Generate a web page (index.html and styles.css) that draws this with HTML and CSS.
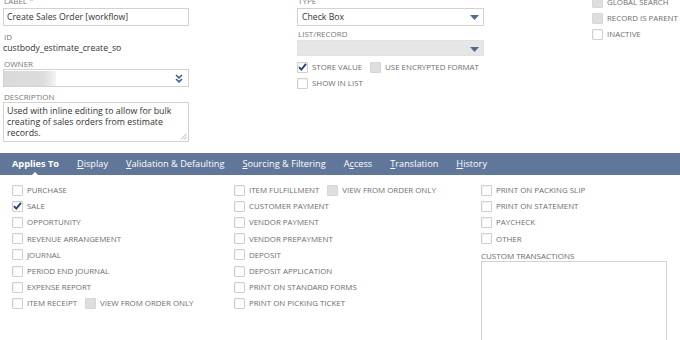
FILE: index.html
```html
<!DOCTYPE html>
<html>
<head>
<meta charset="utf-8">
<link rel="stylesheet" href="styles.css">
</head>
<body>
<div class="top">
  <div class="col">
    <div class="field">
      <div class="lbl">LABEL <span class="req">*</span></div>
      <div class="input">Create Sales Order [workflow]</div>
    </div>
    <div class="field f-id">
      <div class="lbl">ID</div>
      <div class="val">custbody_estimate_create_so</div>
    </div>
    <div class="field f-owner">
      <div class="lbl">OWNER</div>
      <div class="input owner">
        <span class="blur"></span>
        <svg class="dbl" width="8" height="9" viewBox="0 0 8 9"><path d="M1 1 L4 3.8 L7 1 M1 5 L4 7.8 L7 5" fill="none" stroke="#3d5f95" stroke-width="1.6"/></svg>
      </div>
    </div>
    <div class="field f-desc">
      <div class="lbl">DESCRIPTION</div>
      <div class="textarea">Used with inline editing to allow for bulk creating of sales orders from estimate records.
        <svg class="grip" width="7" height="7" viewBox="0 0 7 7"><path d="M6.5 1 L1 6.5 M6.5 4 L4 6.5" stroke="#999" stroke-width="0.8"/></svg>
      </div>
    </div>
  </div>

  <div class="col">
    <div class="field">
      <div class="lbl">TYPE</div>
      <div class="input select">
        <span>Check Box</span>
        <svg width="9" height="5" viewBox="0 0 9 5"><path d="M0 0 H9 L4.5 5 Z" fill="#506a94"/></svg>
      </div>
    </div>
    <div class="field f-list">
      <div class="lbl">LIST/RECORD</div>
      <div class="input select disabled">
        <span></span>
        <svg width="9" height="5" viewBox="0 0 9 5"><path d="M0 0 H9 L4.5 5 Z" fill="#506a94"/></svg>
      </div>
    </div>
    <div class="cbrow first">
      <span class="cb"><svg width="11" height="11" viewBox="0 0 11 11"><path d="M2 5.2 L4.3 7.6 L9 1.8" fill="none" stroke="#24467a" stroke-width="1.9"/></svg></span>
      <span class="cbl">STORE VALUE</span>
      <span class="cb grey"></span>
      <span class="cbl">USE ENCRYPTED FORMAT</span>
    </div>
    <div class="cbrow second">
      <span class="cb"></span>
      <span class="cbl">SHOW IN LIST</span>
    </div>
  </div>

  <div class="col right">
    <div class="cbrow r"><span class="cb grey"></span><span class="cbl">GLOBAL SEARCH</span></div>
    <div class="cbrow r"><span class="cb grey"></span><span class="cbl">RECORD IS PARENT</span></div>
    <div class="cbrow r"><span class="cb"></span><span class="cbl">INACTIVE</span></div>
  </div>
</div>

<div class="tabs">
  <span class="tab active">Applies To<i class="notch"></i></span>
  <span class="tab"><u>D</u>isplay</span>
  <span class="tab"><u>V</u>alidation &amp; Defaulting</span>
  <span class="tab"><u>S</u>ourcing &amp; Filtering</span>
  <span class="tab">A<u>c</u>cess</span>
  <span class="tab"><u>T</u>ranslation</span>
  <span class="tab"><u>H</u>istory</span>
</div>

<div class="panel">
  <div class="pcol">
    <div class="prow"><span class="cb"></span><span class="cbl">PURCHASE</span></div>
    <div class="prow"><span class="cb"><svg width="11" height="11" viewBox="0 0 11 11"><path d="M2 5.2 L4.3 7.6 L9 1.8" fill="none" stroke="#24467a" stroke-width="1.9"/></svg></span><span class="cbl">SALE</span></div>
    <div class="prow"><span class="cb"></span><span class="cbl">OPPORTUNITY</span></div>
    <div class="prow"><span class="cb"></span><span class="cbl">REVENUE ARRANGEMENT</span></div>
    <div class="prow"><span class="cb"></span><span class="cbl">JOURNAL</span></div>
    <div class="prow"><span class="cb"></span><span class="cbl">PERIOD END JOURNAL</span></div>
    <div class="prow"><span class="cb"></span><span class="cbl">EXPENSE REPORT</span></div>
    <div class="prow"><span class="cb"></span><span class="cbl">ITEM RECEIPT</span><span class="cb grey"></span><span class="cbl">VIEW FROM ORDER ONLY</span></div>
  </div>
  <div class="pcol">
    <div class="prow"><span class="cb"></span><span class="cbl">ITEM FULFILLMENT</span><span class="cb grey"></span><span class="cbl">VIEW FROM ORDER ONLY</span></div>
    <div class="prow"><span class="cb"></span><span class="cbl">CUSTOMER PAYMENT</span></div>
    <div class="prow"><span class="cb"></span><span class="cbl">VENDOR PAYMENT</span></div>
    <div class="prow"><span class="cb"></span><span class="cbl">VENDOR PREPAYMENT</span></div>
    <div class="prow"><span class="cb"></span><span class="cbl">DEPOSIT</span></div>
    <div class="prow"><span class="cb"></span><span class="cbl">DEPOSIT APPLICATION</span></div>
    <div class="prow"><span class="cb"></span><span class="cbl">PRINT ON STANDARD FORMS</span></div>
    <div class="prow"><span class="cb"></span><span class="cbl">PRINT ON PICKING TICKET</span></div>
  </div>
  <div class="pcol">
    <div class="prow"><span class="cb"></span><span class="cbl">PRINT ON PACKING SLIP</span></div>
    <div class="prow"><span class="cb"></span><span class="cbl">PRINT ON STATEMENT</span></div>
    <div class="prow"><span class="cb"></span><span class="cbl">PAYCHECK</span></div>
    <div class="prow"><span class="cb"></span><span class="cbl">OTHER</span></div>
    <div class="lbl ct">CUSTOM TRANSACTIONS</div>
    <div class="ctbox"></div>
  </div>
</div>
</body>
</html>
```

FILE: styles.css
```css
* { box-sizing: border-box; }
html, body { margin: 0; padding: 0; background: #fff; overflow: hidden; }
body {
  width: 680px;
  height: 340px;
  font-family: "Open Sans", "Noto Sans", sans-serif;
  color: #333;
}

.top {
  display: grid;
  grid-template-columns: 186px 187px 1fr;
  column-gap: 108px;
  padding-left: 3px;
  margin-top: -4px;
  margin-bottom: 11px;
}
.col { display: flex; flex-direction: column; }

.lbl {
  font-size: 8px;
  line-height: 10px;
  height: 10px;
  color: #777;
  text-transform: uppercase;
  padding-left: 1px;
  white-space: nowrap;
}
.req { color: #f0a22c; font-size: 9px; }

.input {
  margin-top: 2px;
  height: 18px;
  border: 1px solid #d2d2d2;
  padding: 0 3px;
  font-size: 8.7px;
  line-height: 16px;
  color: #333;
  background: #fff;
  white-space: nowrap;
}
.f-id { margin-top: 6px; }
.val { font-size: 8.7px; line-height: 12px; color: #333; }
.f-owner { margin-top: 5px; }
.f-owner .input { margin-top: 0; }
.owner {
  display: flex;
  align-items: center;
  justify-content: space-between;
  padding: 1px 5px 0 0;
}
.blur {
  width: 52px;
  height: 15px;
  align-self: flex-start;
  background: linear-gradient(to right, #dadada 0%, #dcdcdc 75%, #f3f3f3 100%);
}
.f-desc { margin-top: 5px; }
.textarea {
  position: relative;
  height: 40px;
  border: 1px solid #d2d2d2;
  padding: 3px 3px 0 3px;
  font-size: 8.8px;
  line-height: 11px;
  color: #333;
}
.grip { position: absolute; right: 1px; bottom: 1px; }

.select {
  display: flex;
  align-items: center;
  justify-content: space-between;
  padding: 0 4px 0 4px;
}
.f-list { margin-top: 3px; }
.f-list .input { margin-top: 1px; height: 16px; }
.disabled { background: #e6e6e6; border-color: #e2e2e2; }
.disabled svg { margin-top: 3px; }

.cbrow {
  display: flex;
  align-items: center;
  height: 12px;
}
.cbrow.first { margin-top: 5px; }
.cbrow.second { margin-top: 4px; }
.right .cbrow.r { height: 16px; }
.right { margin-top: -2px; }

.cb {
  flex: none;
  width: 11px;
  height: 11px;
  border: 1px solid #cfcfcf;
  border-radius: 1px;
  background: #fff;
  box-shadow: inset 1px 1px 1px rgba(0,0,0,0.05);
  position: relative;
  margin-right: 4px;
}
.cb svg { position: absolute; left: -1px; top: -1px; }
.cb.grey { background: #dedede; border-color: #d6d6d6; box-shadow: none; }
.cbl {
  font-size: 7.9px;
  color: #6e6e6e;
  white-space: nowrap;
  margin-right: 8px;
  line-height: 12px;
}

.tabs {
  display: flex;
  align-items: center;
  gap: 18px;
  height: 22px;
  padding-left: 12px;
  background: #607799;
  color: #fff;
  font-size: 9.2px;
}
.tab { position: relative; white-space: nowrap; line-height: 22px; }
.tab u { text-decoration-thickness: 1px; text-underline-offset: 1px; }
.tab.active { font-weight: 700; }
.notch {
  position: absolute;
  left: 50%;
  bottom: 0;
  margin-left: -3px;
  width: 0; height: 0;
  border-left: 3px solid transparent;
  border-right: 3px solid transparent;
  border-bottom: 3px solid #fff;
}

.panel {
  display: grid;
  grid-template-columns: 222px 247px 187px;
  padding: 7px 0 0 12px;
}
.prow {
  display: flex;
  align-items: center;
  height: 16.2px;
}
.ct { margin-top: 4px; padding-left: 0; color: #6a6a6a; }
.ctbox {
  width: 186px;
  height: 100px;
  border: 1px solid #d2d2d2;
}
```
